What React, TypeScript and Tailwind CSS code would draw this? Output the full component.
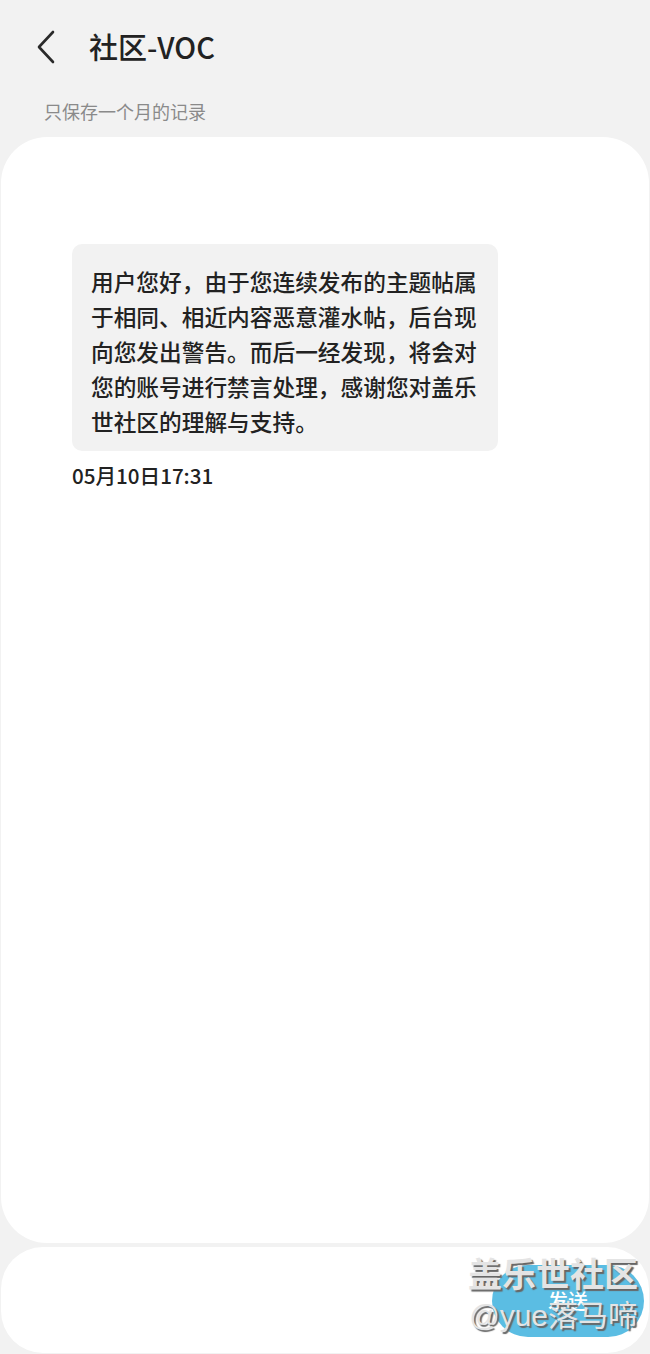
import React from "react";

const font = { fontFamily: '"Noto Sans CJK SC", "Noto Sans", Roboto, sans-serif' };

export default function App() {
  return (
    <div
      className="w-[650px] h-[1354px] bg-[#f2f2f2] flex flex-col overflow-hidden relative"
      style={font}
    >
      {/* Header */}
      <div className="h-[92px] flex items-center pl-[34px] pt-[1px]">
        <svg width="24" height="36" viewBox="0 0 24 36" className="mr-[31px]">
          <path d="M19 3 L5 18 L19 33" fill="none" stroke="#2a2a2a" strokeWidth="2.6" strokeLinecap="round" strokeLinejoin="round" />
        </svg>
        <span className="text-[29px] font-medium text-[#222] leading-none tracking-[0px]">社区-VOC</span>
      </div>
      <div className="pl-[44px] h-[45px] text-[18px] text-[#8a8a8a] leading-none pt-[10px]">只保存一个月的记录</div>

      {/* Main card */}
      <div className="mx-[1px] h-[1106px] bg-white rounded-[46px] pt-[107px] pl-[71px]">
        <div className="w-[426px] bg-[#f2f2f2] rounded-[10px] pl-[19px] pr-[18px] pt-[20px] pb-[12px]">
          <p className="text-[22.7px] leading-[35px] font-medium text-[#222]">
            用户您好，由于您连续发布的主题帖属于相同、相近内容恶意灌水帖，后台现向您发出警告。而后一经发现，将会对您的账号进行禁言处理，感谢您对盖乐世社区的理解与支持。
          </p>
        </div>
        <div className="mt-[10px] text-[20.6px] font-medium text-[#222] leading-[28px]">05月10日17:31</div>
      </div>

      {/* Input card */}
      <div className="mx-[1px] mt-[4px] h-[106px] bg-white rounded-[42px] flex items-center justify-end pr-[5px] pt-[1px]">
        <div className="w-[152px] h-[72px] rounded-full bg-[#5bbde3] flex items-center justify-center text-white text-[20px] font-medium">
          发送
        </div>
      </div>

      {/* Watermark */}
      <div
        className="absolute right-[12px] top-[1255px] flex flex-col items-end text-[#e4e4e4] pointer-events-none"
        style={{ textShadow: "2px 2px 1px #666", fontFamily: '"Liberation Sans", "Noto Sans CJK SC", sans-serif' }}
      >
        <span className="text-[34px] leading-[40px] font-bold">盖乐世社区</span>
        <span className="text-[30px] leading-[38px] mt-[2px]">@yue落马啼</span>
      </div>
    </div>
  );
}
